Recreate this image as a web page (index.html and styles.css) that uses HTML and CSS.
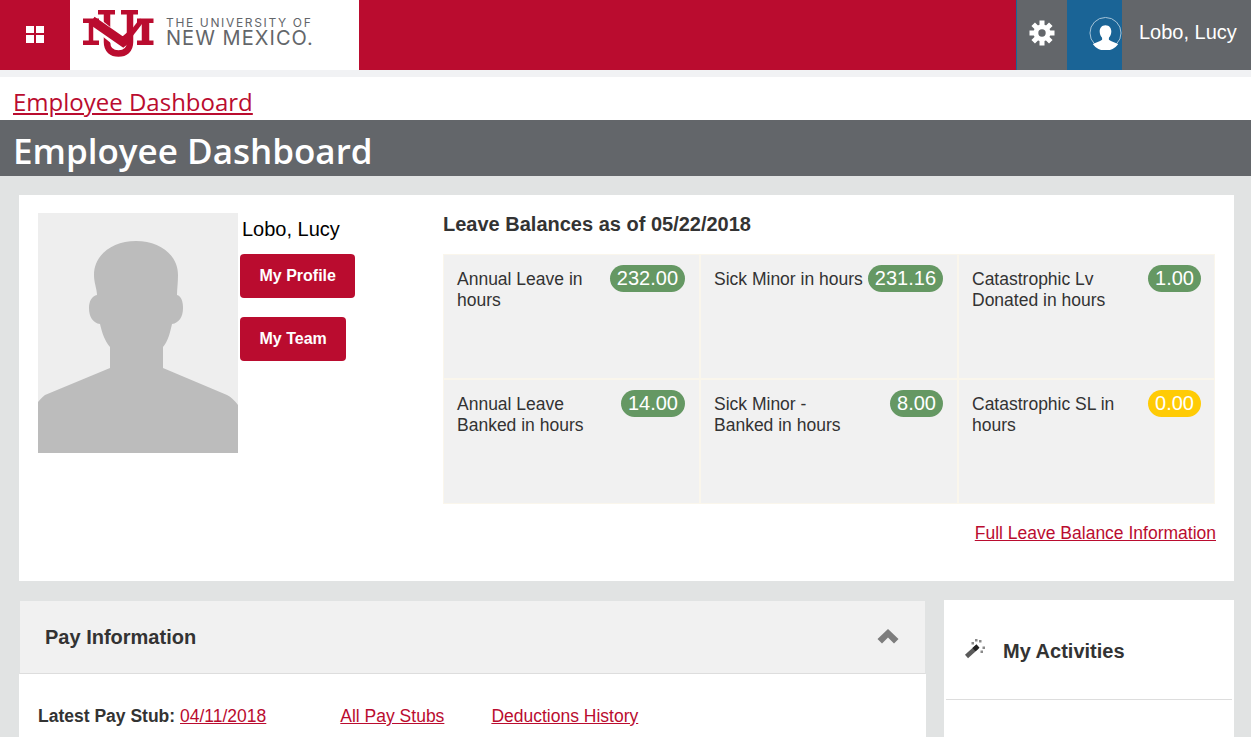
FILE: index.html
```html
<!DOCTYPE html>
<html lang="en">
<head>
<meta charset="utf-8">
<title>Employee Dashboard</title>
<link rel="stylesheet" href="styles.css">
</head>
<body>
<header class="topbar">
  <a class="apps" aria-label="Applications">
    <svg width="18" height="18" viewBox="0 0 18 18"><path fill="#fff" d="M0 0h8v7H0zM10 0h8v7h-8zM0 9h8v8H0zM10 9h8v8h-8z"/></svg>
  </a>
  <div class="brand">
    <svg class="mark" width="71" height="47" viewBox="0 0 71 47">
      <g fill="none" stroke="#ba0c2f">
        <path stroke-width="6.500" d="M24 1V32C24 40 29 43.500 35.500 43.500S47 40 47 32V1"/>
        <path stroke="#fff" stroke-width="12" d="M10 11L40 35"/>
        <path stroke-width="9" d="M9 10.500L40 32L47 26"/>
        <path stroke-width="5" d="M40 34.500L59 10"/>
        <path stroke-width="4.500" d="M8 9V33"/>
        <path stroke-width="7.500" d="M62.500 10V33"/>
      </g>
      <g fill="#ba0c2f">
        <path d="M0 8.500h16v4.500H0zM0 30.500h16V35H0zM15 0h17v4.500H15zM38 0h17v4.500H38zM54 8.500h16.500v4.500H54zM54 30.500h16.500V35H54z"/>
      </g>
    </svg>
    <div class="wordmark">
      <span class="word-top">THE UNIVERSITY OF</span>
      <span class="word-main">NEW MEXICO.</span>
    </div>
  </div>
  <div class="bar-fill"></div>
  <a class="gear" aria-label="Settings">
    <svg width="26" height="26" viewBox="-13 -13 26 26">
      <circle r="8.500" fill="#fff"/>
      <path stroke="#fff" stroke-width="5" d="M0-12.500V12.500M-12.500 0H12.500M-8.800-8.800L8.800 8.800M-8.800 8.800L8.800-8.800"/>
      <circle r="3.700" fill="#63666a"/>
    </svg>
  </a>
  <div class="avatar-box">
    <svg width="34" height="34" viewBox="0 0 34 34">
      <circle cx="17" cy="17" r="16" fill="#1a6496" stroke="#a9c6da" stroke-width="1"/>
      <path fill="#fff" d="M17 9C21 9 23 12 23 15.500 23 18 22 20.500 20.500 22V24C23 26 27 26.500 30 28.500A16 16 0 0 1 4 28.500C7 26.500 11 26 13.500 24V22C12 20.500 11 18 11 15.500 11 12 13 9 17 9Z"/>
    </svg>
  </div>
  <div class="user-name">Lobo, Lucy</div>
</header>
<div class="strip"></div>
<nav class="crumbs"><a href="#">Employee Dashboard</a></nav>
<h1 class="page-title">Employee Dashboard</h1>
<main class="content">
  <section class="summary">
    <svg class="photo" width="200" height="240" viewBox="0 0 200 240">
      <rect width="200" height="240" fill="#eee"/>
      <path fill="#bcbcbc" d="M98 28C122 28 140 42 140 62 140 70 139 76 139 82 143 83 145 88 145 95 145 104 141 110 134 111 132 120 130 128 125 134V155L189 182C193 184 197 188 200 192V240H0V189C2 187 4 184 7 182L72 155V134C67 128 64 120 62 111 55 110 51 104 51 95 51 88 54 83 59 82 59 76 56 70 56 62 56 42 74 28 98 28Z"/>
    </svg>
    <div class="person">
      <div class="person-name">Lobo, Lucy</div>
      <a class="btn btn-profile" href="#">My Profile</a>
      <a class="btn btn-team" href="#">My Team</a>
    </div>
    <div class="leave">
      <h2 class="leave-title">Leave Balances as of 05/22/2018</h2>
      <div class="leave-grid">
        <div class="cell"><span class="cell-label">Annual Leave in hours</span><span class="pill">232.00</span></div>
        <div class="cell"><span class="cell-label cell-label-wide">Sick Minor in hours</span><span class="pill">231.16</span></div>
        <div class="cell"><span class="cell-label">Catastrophic Lv Donated in hours</span><span class="pill">1.00</span></div>
        <div class="cell"><span class="cell-label">Annual Leave Banked in hours</span><span class="pill">14.00</span></div>
        <div class="cell"><span class="cell-label">Sick Minor - Banked in hours</span><span class="pill">8.00</span></div>
        <div class="cell"><span class="cell-label">Catastrophic SL in hours</span><span class="pill pill-warn">0.00</span></div>
      </div>
      <div class="leave-link"><a href="#">Full Leave Balance Information</a></div>
    </div>
  </section>
  <div class="lower">
    <section class="pay">
      <div class="pay-head">
        <h2>Pay Information</h2>
        <svg class="chevron" width="22" height="15" viewBox="0 0 22 15"><path fill="#7d7d7d" d="M11 0l10.500 10-4.500 4.500L11 8.500 5 14.500 .5 10z"/></svg>
      </div>
      <div class="pay-body">
        <span><b>Latest Pay Stub:</b> <a href="#">04/11/2018</a></span>
        <a class="pay-all" href="#">All Pay Stubs</a>
        <a href="#">Deductions History</a>
      </div>
    </section>
    <aside class="activities">
      <div class="act-head">
        <svg class="wand" width="22" height="22" viewBox="0 0 22 22">
          <path stroke="#5a5a5a" stroke-width="4.500" d="M2.500 17.500L13 8"/>
          <path stroke="#222" stroke-width="4.500" d="M10 10.700L14 7"/>
          <path fill="#8a8a8a" d="M11 0h2.500v2.500H11zM15 1h2.500v2.500H15zM7.500 3H10v2.500H7.500zM18.500 7.500H21V10h-2.500zM16.500 11.500H19V14h-2.500z"/>
        </svg>
        <h2>My Activities</h2>
      </div>
    </aside>
  </div>
</main>
</body>
</html>
```

FILE: styles.css
```css
* { box-sizing: border-box; }
html, body { margin: 0; height: 737px; overflow: hidden; }
body { font-family: "Liberation Sans", Arial, sans-serif; background: #fff; color: #333; }
a { color: #ba0c2f; }

.topbar { display: flex; height: 70px; background: #ba0c2f; }
.apps { width: 70px; display: flex; align-items: center; justify-content: center; padding-bottom: 1px; }
.brand { width: 289px; background: #fff; display: flex; align-items: flex-start; padding: 10px 0 0 13px; }
.mark { flex: none; }
.wordmark { display: flex; flex-direction: column; margin-left: 12px; padding-top: 6px; color: #63666a; font-family: Inter, sans-serif; }
.word-top { font-size: 12px; line-height: 13px; letter-spacing: 1.650px; white-space: nowrap; }
.word-main { font-size: 20px; line-height: 19px; white-space: nowrap; letter-spacing: 1.050px; }
.bar-fill { flex: 1; }
.gear { width: 51px; background: #63666a; border-left: 1px solid #1a6496; display: flex; align-items: center; justify-content: center; padding-bottom: 5px; }
.avatar-box { width: 55px; background: #1a6496; display: flex; align-items: center; padding: 0 0 4px 22px; }
.user-name { width: 129px; background: #63666a; color: #fff; font-size: 20px; padding: 21px 0 0 17px; line-height: 22px; white-space: nowrap; }

.strip { height: 7px; background: #f1f2f4; }
.crumbs { height: 43px; padding: 8px 0 0 13px; font-family: "Open Sans", sans-serif; font-size: 24px; line-height: 33px; }
.page-title { margin: 0; height: 56px; background: #63666a; color: #fff; padding-left: 13px; font-family: "Open Sans", sans-serif; font-weight: 600; font-size: 35px; line-height: 62px; }

.content { background: #e1e3e3; padding: 19px 17px 0 19px; height: 561px; }
.summary { background: #fff; height: 386px; padding: 18px 19px 0; display: flex; }
.photo { flex: none; display: block; }
.person { width: 205px; padding: 5px 0 0 2px; flex: none; }
.person-name { color: #000; font-size: 20px; line-height: 22px; padding-left: 2px; margin-bottom: 14px; white-space: nowrap; }
.btn { display: block; width: fit-content; background: #ba0c2f; color: #fff; font-size: 16px; font-weight: 700; text-decoration: none; border-radius: 4px; height: 44px; line-height: 44px; padding: 0 19.500px; }
.btn-team { margin-top: 19px; }

.leave { flex: 1; }
.leave-title { margin: 0 0 18px; font-size: 20px; line-height: 23px; font-weight: 700; color: #333; }
.leave-grid { display: grid; grid-template-columns: 255px 256px 255px; grid-auto-rows: 123px; gap: 2px; background: #faf6ec; border: 1px solid #faf6ec; width: 772px; }
.cell { background: #f1f1f1; display: flex; align-items: flex-start; justify-content: space-between; padding: 11px 14px 0 13px; font-size: 17.500px; line-height: 21px; }
.cell:nth-child(3n) { padding-right: 13px; }
.cell-label { max-width: 145px; color: #333; margin-top: 3px; }
.cell-label-wide { max-width: none; white-space: nowrap; }
.pill { flex: none; background: #659863; color: #fff; font-size: 20px; line-height: 27px; height: 27px; border-radius: 14px; padding: 0 7px; margin-top: -1px; }
.pill-warn { background: #ffcb05; }
.leave-link { text-align: right; margin: 18px -1px 0 0; font-size: 17.500px; line-height: 22px; }

.lower { display: flex; margin-top: 19px; align-items: flex-start; }
.pay { width: 907px; background: #fff; height: 137px; }
.pay-head { height: 74px; background: #f1f1f1; border: 1px solid #e1e3e3; border-bottom: 1px solid #ddd; display: flex; align-items: center; justify-content: space-between; padding: 0 26px 0 25px; }
.pay-head h2 { margin: 0; font-size: 20px; font-weight: 700; color: #333; }
.chevron { margin-bottom: 2px; }
.pay-body { padding: 31px 0 0 19px; font-size: 17.500px; line-height: 22px; display: flex; }
.pay-body b { color: #333; }
.pay-all { margin: 0 47px 0 74px; }
.activities { width: 290px; margin-left: 18px; background: #fff; height: 137px; }
.act-head { height: 100px; margin: 0 2px; border-bottom: 1px solid #ddd; display: flex; align-items: center; padding: 4px 0 0 18px; }
.wand { margin-top: -3px; }
.act-head h2 { margin: 0 0 0 17px; font-size: 20px; font-weight: 700; color: #333; }
```
